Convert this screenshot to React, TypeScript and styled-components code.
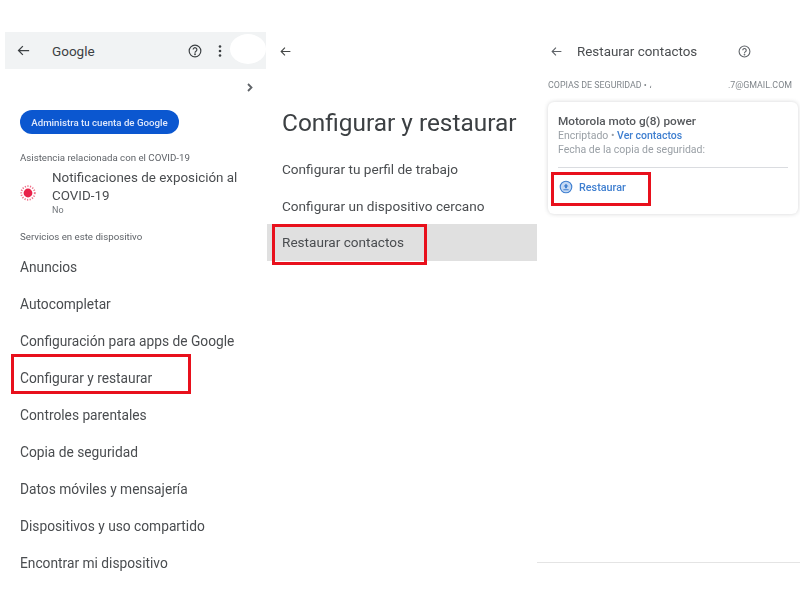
import styled, { createGlobalStyle } from 'styled-components';

const GlobalStyle = createGlobalStyle`
html, body {
    margin: 0;
    padding: 0;
    background: #ffffff;
}
body {
    font-family: Roboto, "Liberation Sans", sans-serif;
    color: #444746;
}
`;

const Page = styled.div`
width: 800px;
height: 600px;
overflow: hidden;
display: grid;
grid-template-columns: 267px 270px 263px;
filter: blur(0.5px);
`;

const Column = styled.section`
display: flex;
flex-direction: column;
height: 600px;
position: relative;
`;

/* first screen */
const GoogleBar = styled.header`
margin: 32px 1px 0 5px;
height: 37px;
background: #f1f3f4;
display: flex;
align-items: center;
padding-left: 11px;
color: #3c4043;
`;

const BarTitle = styled.span`
font-size: 13.5px;
margin-left: 21px;
flex: 1;
`;

const BarIcons = styled.div`
display: flex;
align-items: center;
gap: 16px;
margin-right: 44px;
`;

const Avatar = styled.div`
position: absolute;
top: 34px;
right: 1px;
width: 36px;
height: 30px;
border-radius: 50%;
background: #ffffff;
`;

const ChevronRow = styled.div`
display: flex;
justify-content: flex-end;
padding: 14px 13px 0 0;
height: 10px;
color: #5f6368;
`;

const AccountButton = styled.div`
margin: 17px 0 0 20px;
width: 159px;
height: 24px;
border-radius: 12px;
background: #0b57d0;
color: #dfe8fb;
font-size: 9.7px;
font-weight: 500;
display: flex;
align-items: center;
justify-content: center;
white-space: nowrap;
`;

const SectionLabel = styled.div<{ $top: number }>`
margin: ${(props) => props.$top}px 0 0 20px;
font-size: 9.7px;
line-height: 12px;
color: #5f6368;
`;

const CovidRow = styled.div`
display: flex;
align-items: center;
margin: 5px 0 0 20px;
gap: 16px;
`;

const CovidTitle = styled.div`
font-size: 13.4px;
line-height: 18px;
color: #4a4d50;
`;

const CovidStatus = styled.div`
font-size: 9px;
line-height: 11px;
color: #70757a;
`;

const MenuList = styled.div`
margin-top: 6px;
display: flex;
flex-direction: column;
`;

const MenuRow = styled.div`
position: relative;
height: 36.9px;
display: flex;
align-items: center;
padding-left: 20px;
font-size: 13.75px;
color: #4a4d50;
white-space: nowrap;
`;

/* red annotation boxes, drawn over the row they mark */
const Mark = styled.div<{ $left: number; $top: number; $width: number; $height: number }>`
position: absolute;
left: ${(props) => props.$left}px;
top: ${(props) => props.$top}px;
width: ${(props) => props.$width}px;
height: ${(props) => props.$height}px;
box-sizing: border-box;
border: 3px solid #e8101c;
`;

/* second screen */
const BackRow = styled.div`
height: 20px;
margin-top: 41px;
padding-left: 12px;
display: flex;
align-items: center;
color: #444746;
`;

const BigTitle = styled.h1`
margin: 44px 0 0 15px;
font-size: 24.4px;
line-height: 36px;
font-weight: 400;
color: #3c4043;
white-space: nowrap;
`;

const SetupList = styled.div`
margin-top: 10px;
display: flex;
flex-direction: column;
`;

const SetupRow = styled.div<{ $active?: boolean }>`
position: relative;
height: 36.5px;
display: flex;
align-items: center;
padding-left: 15px;
font-size: 13.6px;
color: #4a4d50;
background: ${(props) => (props.$active ? '#e0e0e0' : 'transparent')};
`;

/* third screen */
const ContactsBar = styled.header`
margin-top: 41px;
height: 20px;
display: flex;
align-items: center;
padding-left: 13px;
color: #5f6368;
`;

const ContactsTitle = styled.span`
margin-left: 14px;
width: 120px;
font-size: 13.4px;
color: #4a4d50;
white-space: nowrap;
`;

const HelpSlot = styled.span`
margin-left: 41px;
display: flex;
`;

const AccountLine = styled.div`
margin: 19px 8px 0 11px;
display: flex;
justify-content: space-between;
font-size: 8.9px;
line-height: 10px;
color: #80868b;
white-space: nowrap;
`;

const BackupCard = styled.div`
position: relative;
margin: 12px 2px 0 11px;
height: 112px;
box-sizing: border-box;
padding: 12px 10px 0;
border-radius: 6px;
background: #ffffff;
box-shadow: 0 0 4px rgba(60, 64, 67, 0.22);
`;

const DeviceName = styled.div`
font-size: 11.8px;
line-height: 15px;
font-weight: 500;
color: #55585c;
`;

const DeviceMeta = styled.div`
font-size: 10.5px;
line-height: 14px;
color: #9aa0a6;
white-space: nowrap;
`;

const BlueLink = styled.span`
color: #3f7fd0;
font-weight: 500;
`;

const CardRule = styled.div`
margin-top: 10px;
height: 1px;
background: #dadce0;
`;

const RestoreRow = styled.div`
display: flex;
align-items: center;
gap: 6px;
margin: 12px 0 0 1px;
font-size: 10.8px;
font-weight: 500;
color: #3f7fd0;
`;

const FooterRule = styled.div`
margin-top: auto;
margin-bottom: 37px;
height: 1px;
background: #e4e4e4;
`;

function BackArrow({ size }: { size: number }) {
    return (
        <svg width={size} height={size} viewBox="0 0 24 24" fill="none" stroke="currentColor" strokeWidth="2">
            <path d="M21 12H4M11 5l-7 7 7 7" />
        </svg>
    );
}

function HelpIcon({ size }: { size: number }) {
    return (
        <svg width={size} height={size} viewBox="0 0 24 24" fill="none" stroke="currentColor" strokeWidth="2">
            <circle cx="12" cy="12" r="10" />
            <path d="M8.8 9.6a3.2 3.2 0 1 1 4.9 2.7c-1 .7-1.7 1.3-1.7 2.7" />
            <circle cx="12" cy="17.6" r="0.6" fill="currentColor" />
        </svg>
    );
}

function VirusIcon() {
    return (
        <svg width="16" height="16" viewBox="0 0 16 16">
            <circle cx="8" cy="8" r="4.4" fill="#e8234a" />
            <circle cx="8" cy="8" r="6.8" fill="none" stroke="#ef6f88" strokeWidth="1.8" strokeDasharray="1.2 1.4" />
        </svg>
    );
}

function RestoreIcon() {
    return (
        <svg width="14" height="14" viewBox="0 0 16 16" fill="none">
            <circle cx="8" cy="8" r="6.6" fill="#c5d9f3" stroke="#3f7fd0" strokeWidth="1.3" />
            <path d="M8 4.2 5.2 7.4h1.7v2h2.2v-2h1.7zM5 10.6h6v1.2H5z" fill="#3f7fd0" />
        </svg>
    );
}

const services = [
    'Anuncios',
    'Autocompletar',
    'Configuración para apps de Google',
    'Configurar y restaurar',
    'Controles parentales',
    'Copia de seguridad',
    'Datos móviles y mensajería',
    'Dispositivos y uso compartido',
    'Encontrar mi dispositivo',
];

function App() {
    return (
        <Page>
            <GlobalStyle />
            <Column>
                <GoogleBar>
                    <BackArrow size={15} />
                    <BarTitle>Google</BarTitle>
                    <BarIcons>
                        <HelpIcon size={14} />
                        <svg width="4" height="14" viewBox="0 0 4 14" fill="currentColor">
                            <circle cx="2" cy="2.5" r="1.3" />
                            <circle cx="2" cy="7" r="1.3" />
                            <circle cx="2" cy="11.5" r="1.3" />
                        </svg>
                    </BarIcons>
                </GoogleBar>
                <Avatar />
                <ChevronRow>
                    <svg width="8" height="9" viewBox="0 0 8 9" fill="none" stroke="currentColor" strokeWidth="1.8">
                        <path d="M2 1l3.5 3.5L2 8" />
                    </svg>
                </ChevronRow>
                <AccountButton>Administra tu cuenta de Google</AccountButton>
                <SectionLabel $top={18}>Asistencia relacionada con el COVID-19</SectionLabel>
                <CovidRow>
                    <VirusIcon />
                    <div>
                        <CovidTitle>
                            Notificaciones de exposición al
                            <br />
                            COVID-19
                        </CovidTitle>
                        <CovidStatus>No</CovidStatus>
                    </div>
                </CovidRow>
                <SectionLabel $top={15}>Servicios en este dispositivo</SectionLabel>
                <MenuList>
                    {services.map((name) => (
                        <MenuRow key={name}>
                            {name}
                            {name === 'Configurar y restaurar' && <Mark $left={11} $top={-6} $width={180} $height={40} />}
                        </MenuRow>
                    ))}
                </MenuList>
            </Column>

            <Column>
                <BackRow>
                    <BackArrow size={13} />
                </BackRow>
                <BigTitle>Configurar y restaurar</BigTitle>
                <SetupList>
                    <SetupRow>Configurar tu perfil de trabajo</SetupRow>
                    <SetupRow>Configurar un dispositivo cercano</SetupRow>
                    <SetupRow $active>
                        Restaurar contactos
                        <Mark $left={5} $top={0} $width={155} $height={41} />
                    </SetupRow>
                </SetupList>
            </Column>

            <Column>
                <ContactsBar>
                    <BackArrow size={13} />
                    <ContactsTitle>Restaurar contactos</ContactsTitle>
                    <HelpSlot>
                        <HelpIcon size={13} />
                    </HelpSlot>
                </ContactsBar>
                <AccountLine>
                    <span>COPIAS DE SEGURIDAD • ،</span>
                    <span>.7@GMAIL.COM</span>
                </AccountLine>
                <BackupCard>
                    <DeviceName>Motorola moto g(8) power</DeviceName>
                    <DeviceMeta>
                        Encriptado • <BlueLink>Ver contactos</BlueLink>
                    </DeviceMeta>
                    <DeviceMeta>Fecha de la copia de seguridad:</DeviceMeta>
                    <CardRule />
                    <RestoreRow>
                        <RestoreIcon />
                        Restaurar
                    </RestoreRow>
                    <Mark $left={3} $top={70} $width={100} $height={34} />
                </BackupCard>
                <FooterRule />
            </Column>
        </Page>
    );
}

export default App;
